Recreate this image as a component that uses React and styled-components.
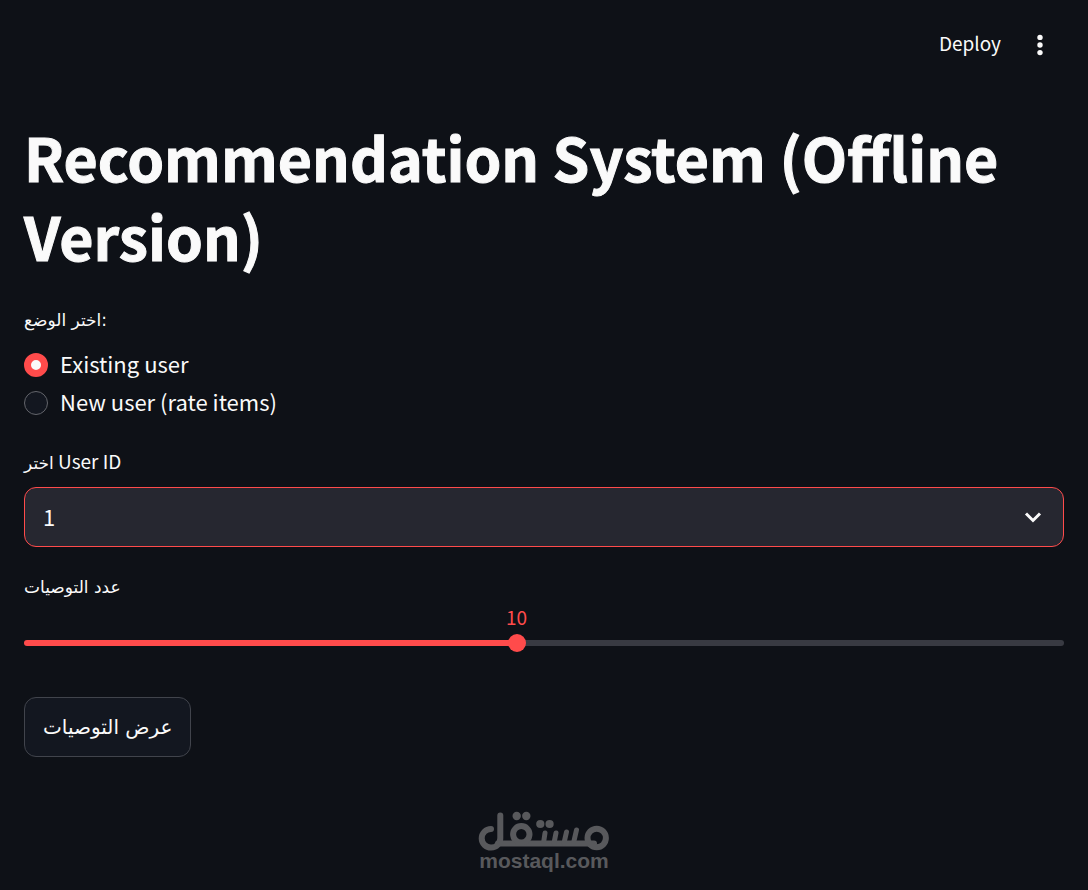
import React, { useState } from "react";
import styled, { createGlobalStyle } from "styled-components";

const GlobalStyle = createGlobalStyle`
   * {
      box-sizing: border-box;
   }

   body {
      margin: 0;
      background-color: #0e1117;
      color: #fafafa;
      font-family: "Noto Sans CJK SC", "DejaVu Sans", sans-serif;
   }
`;

const Container = styled.div`
   min-height: 100vh;
   display: flex;
   flex-direction: column;
`;

const Header = styled.header`
   height: 90px;
   padding: 0px 36px;
   display: flex;
   align-items: center;
   justify-content: flex-end;
   gap: 27px;
`;

const HeaderButton = styled.button`
   padding: 0px 0px 4px;
   border: none;
   background-color: transparent;
   color: inherit;
   font-family: inherit;
   font-size: 19px;
   line-height: 24px;
   cursor: pointer;
`;

const MenuButton = styled(HeaderButton)`
   display: flex;
   padding: 0px;
`;

const Main = styled.main`
   padding: 27px 24px 0px;
   flex: 1;
`;

const Title = styled.h1`
   margin: 0px 0px 27px;
   font-size: 59px;
   font-weight: 700;
   line-height: 79px;
   -webkit-text-stroke: 1px currentColor;
`;

const Field = styled.div`
   margin-bottom: 22px;
`;

const RadioGroup = styled.fieldset`
   margin: 0px 0px 25px;
   padding: 0px;
   border: none;
`;

const Legend = styled.legend`
   padding: 0px;
   margin-bottom: 8px;
   font-size: 19px;
   line-height: 32px;
`;

const Label = styled.label`
   display: block;
   margin-bottom: ${(props) => (props.$tight ? 2 : 8)}px;
   font-size: 19px;
   line-height: 32px;
`;

const Arabic = styled.span`
   font-family: "DejaVu Sans", sans-serif;
   font-size: ${(props) => props.$size}px;
`;

const RadioLabel = styled.label`
   display: flex;
   align-items: center;
   gap: 12px;
   font-size: 22px;
   line-height: 38px;
   cursor: pointer;
`;

const Radio = styled.input`
   appearance: none;
   width: 24px;
   height: 24px;
   margin: 4px 0px 0px;
   border: 1px solid #63656b;
   border-radius: 50%;
   background-color: #131720;

   &:checked {
      border: 7px solid #ff4b4b;
      background-color: #fafafa;
   }
`;

const SelectBox = styled.div`
   position: relative;
`;

const Select = styled.select`
   appearance: none;
   display: block;
   width: 100%;
   height: 60px;
   padding: 0px 18px 3px;
   border: 1px solid #ff4b4b;
   border-radius: 12px;
   outline: none;
   background-color: #262730;
   color: inherit;
   font-family: inherit;
   font-size: 22px;
`;

const Chevron = styled.svg`
   position: absolute;
   top: 18px;
   right: 19px;
   pointer-events: none;
`;

const SliderValue = styled.output`
   display: block;
   width: 40px;
   margin-left: calc(${(props) => props.$percent}% - 20px);
   color: #ff4b4b;
   font-size: 19px;
   line-height: 24px;
   text-align: center;
`;

const Slider = styled.input`
   appearance: none;
   display: block;
   width: 100%;
   height: 18px;
   margin: 5px 0px 0px;
   background-color: transparent;

   &::-webkit-slider-runnable-track {
      height: 6px;
      border-radius: 3px;
      background: linear-gradient(
         to right,
         #ff4b4b ${(props) => props.$percent}%,
         #383a42 ${(props) => props.$percent}%
      );
   }

   &::-webkit-slider-thumb {
      appearance: none;
      width: 18px;
      height: 18px;
      margin-top: -6px;
      border-radius: 50%;
      background-color: #ff4b4b;
   }
`;

const Button = styled.button`
   height: 60px;
   margin-top: 23px;
   padding: 0px 18px;
   border: 1px solid #41444c;
   border-radius: 12px;
   background-color: #131720;
   color: inherit;
   cursor: pointer;

   &:hover {
      border-color: #ff4b4b;
      color: #ff4b4b;
   }
`;

const Footer = styled.footer`
   padding-bottom: 19px;
   display: flex;
   flex-direction: column;
   align-items: center;
   color: #58595c;
`;

const Brand = styled.span`
   font-family: "Liberation Sans", Arial, sans-serif;
   font-size: 21px;
   font-weight: 700;
   line-height: 20px;
`;

const Logo = () => (
   <svg width="132" height="40" viewBox="0 0 132 40" aria-hidden="true">
      <g
         fill="none"
         stroke="currentColor"
         strokeWidth="6"
         strokeLinecap="round"
         strokeLinejoin="round"
      >
         <path d="M13 18 A9.300 9.300 0 1 0 22.300 27 V4.500" />
         <path d="M20 32.500 H116" />
         <circle cx="43.300" cy="23.300" r="8.200" />
         <circle cx="118.700" cy="27" r="9.200" />
      </g>
      <g
         fill="none"
         stroke="currentColor"
         strokeWidth="5"
         strokeLinecap="round"
      >
         <path d="M67 22 L65.500 32 M78 22 L76 32 M88.500 21 L86 32 M98.500 19 L95.500 32" />
      </g>
      <g fill="currentColor">
         <circle cx="38.700" cy="5" r="4.200" />
         <circle cx="48.300" cy="5" r="4.200" />
         <circle cx="62.300" cy="13" r="4.100" />
         <circle cx="71.600" cy="13" r="4.100" />
      </g>
   </svg>
);

const App = () => {
   const [mode, setMode] = useState("existing");
   const [userId, setUserId] = useState("1");
   const [count, setCount] = useState(10);
   const percent = ((count - 1) / 19) * 100;

   return (
      <Container>
         <GlobalStyle />
         <Header>
            <HeaderButton>Deploy</HeaderButton>
            <MenuButton aria-label="Menu">
               <svg width="24" height="24" viewBox="0 0 24 24" fill="currentColor">
                  <circle cx="12" cy="4.400" r="2.700" />
                  <circle cx="12" cy="12" r="2.700" />
                  <circle cx="12" cy="19.600" r="2.700" />
               </svg>
            </MenuButton>
         </Header>
         <Main>
            <Title>Recommendation System (Offline Version)</Title>
            <RadioGroup>
               <Legend>
                  <Arabic $size={17}>اختر الوضع:</Arabic>
               </Legend>
               <RadioLabel>
                  <Radio
                     type="radio"
                     name="mode"
                     checked={mode === "existing"}
                     onChange={() => setMode("existing")}
                  />
                  Existing user
               </RadioLabel>
               <RadioLabel>
                  <Radio
                     type="radio"
                     name="mode"
                     checked={mode === "new"}
                     onChange={() => setMode("new")}
                  />
                  New user (rate items)
               </RadioLabel>
            </RadioGroup>
            <Field>
               <Label htmlFor="user">
                  <Arabic $size={17}>اختر</Arabic> User ID
               </Label>
               <SelectBox>
                  <Select
                     id="user"
                     value={userId}
                     onChange={(e) => setUserId(e.target.value)}
                  >
                     <option>1</option>
                     <option>2</option>
                     <option>3</option>
                  </Select>
                  <Chevron
                     width="24"
                     height="24"
                     viewBox="0 0 24 24"
                     fill="none"
                     stroke="currentColor"
                     strokeWidth="3"
                  >
                     <path d="M5 8.500 L12 15.500 L19 8.500" />
                  </Chevron>
               </SelectBox>
            </Field>
            <Field>
               <Label htmlFor="count" $tight>
                  <Arabic $size={17}>عدد التوصيات</Arabic>
               </Label>
               <SliderValue htmlFor="count" $percent={percent}>
                  {count}
               </SliderValue>
               <Slider
                  id="count"
                  type="range"
                  min="1"
                  max="20"
                  value={count}
                  $percent={percent}
                  onChange={(e) => setCount(Number(e.target.value))}
               />
            </Field>
            <Button>
               <Arabic $size={20}>عرض التوصيات</Arabic>
            </Button>
         </Main>
         <Footer>
            <Logo />
            <Brand>mostaql.com</Brand>
         </Footer>
      </Container>
   );
};

export default App;
